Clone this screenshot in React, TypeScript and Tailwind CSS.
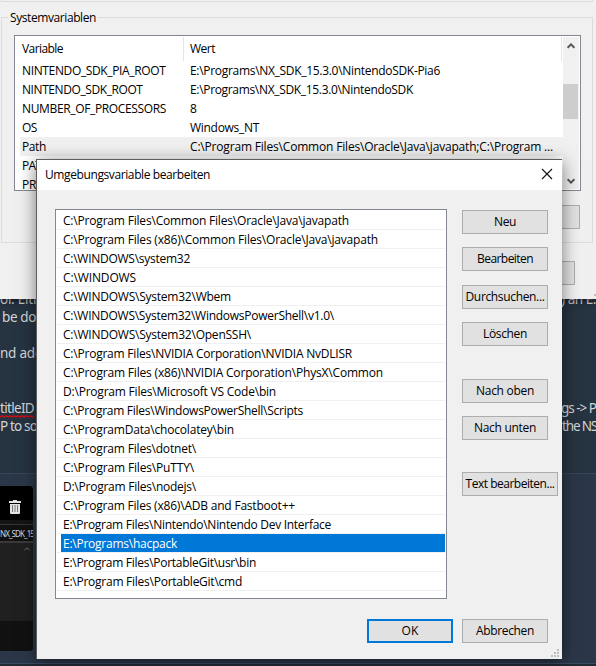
import { useLayoutEffect, useRef, useState } from "react";

// Text run whose tracking is adjusted so that it spans `w` pixels.
function Fit({ t, w }: { t: string; w: number }) {
  const ref = useRef<HTMLSpanElement>(null);
  const [ls, setLs] = useState(0);
  useLayoutEffect(() => {
    if (ref.current) {
      const natural = ref.current.getBoundingClientRect().width - ls * t.length;
      setLs((w - natural) / t.length);
    }
  }, [t, w]);
  return (
    <span ref={ref} className="inline-block whitespace-pre" style={{ letterSpacing: ls }}>
      {t}
    </span>
  );
}

type Row = [string, number, string, number];
const variables: Row[] = [
  ["NINTENDO_SDK_PIA_ROOT", 143.5, "E:\\Programs\\NX_SDK_15.3.0\\NintendoSDK-Pia6", 250],
  ["NINTENDO_SDK_ROOT", 120.5, "E:\\Programs\\NX_SDK_15.3.0\\NintendoSDK", 223],
  ["NUMBER_OF_PROCESSORS", 144, "8", 6.5],
  ["OS", 15, "Windows_NT", 69],
  ["Path", 24, "C:\\Program Files\\Common Files\\Oracle\\Java\\javapath;C:\\Program ...", 363],
  ["PAT", 19, "", 0],
  ["PR", 14, "", 0],
];

const paths: [string, number][] = [
  ["C:\\Program Files\\Common Files\\Oracle\\Java\\javapath", 286],
  ["C:\\Program Files (x86)\\Common Files\\Oracle\\Java\\javapath", 315],
  ["C:\\WINDOWS\\system32", 127],
  ["C:\\WINDOWS", 73],
  ["C:\\WINDOWS\\System32\\Wbem", 168],
  ["C:\\WINDOWS\\System32\\WindowsPowerShell\\v1.0\\", 271],
  ["C:\\WINDOWS\\System32\\OpenSSH\\", 188],
  ["C:\\Program Files\\NVIDIA Corporation\\NVIDIA NvDLISR", 289],
  ["C:\\Program Files (x86)\\NVIDIA Corporation\\PhysX\\Common", 320],
  ["D:\\Program Files\\Microsoft VS Code\\bin", 213],
  ["C:\\Program Files\\WindowsPowerShell\\Scripts", 240],
  ["C:\\ProgramData\\chocolatey\\bin", 171],
  ["C:\\Program Files\\dotnet\\", 133],
  ["C:\\Program Files\\PuTTY\\", 131],
  ["D:\\Program Files\\nodejs\\", 133],
  ["C:\\Program Files (x86)\\ADB and Fastboot++", 232],
  ["E:\\Program Files\\Nintendo\\Nintendo Dev Interface", 268],
  ["E:\\Programs\\hacpack", 114],
  ["E:\\Program Files\\PortableGit\\usr\\bin", 193],
  ["E:\\Program Files\\PortableGit\\cmd", 179],
];

function Button({ t, w, className = "", primary = false }: { t: string; w: number; className?: string; primary?: boolean }) {
  return (
    <button
      className={`flex h-6 shrink-0 items-center justify-center bg-[#e1e1e1] ${
        primary ? "border-2 border-[#0078d7]" : "border border-[#adadad]"
      } ${className || "w-[86px]"}`}
    >
      <Fit t={t} w={w} />
    </button>
  );
}

function Chevron({ down = false }: { down?: boolean }) {
  return (
    <svg viewBox="0 0 8 6" className={`h-1.5 w-2 ${down ? "rotate-180" : ""}`}>
      <path d="M0.6 4.8 4 1.4 7.4 4.8" fill="none" stroke="#555" strokeWidth="2" />
    </svg>
  );
}

function ForumPage() {
  return (
    <div className="flex h-[666px] flex-col bg-[#263340] font-['Noto_Sans','Open_Sans',sans-serif] text-[13.5px] text-[#d2d5d8]">
      <div className="h-[473px] pt-[290px] leading-[18px]">
        <div className="flex h-[18px] justify-between">
          <Fit t="or. Eith" w={41} />
          <div className="w-[35px]"><Fit t=") an E:" w={35} /></div>
        </div>
        <div className="h-[18px] pl-0.5"><Fit t="be do" w={34} /></div>
        <div className="mt-[18px] h-[18px]"><Fit t="nd add" w={43} /></div>
        <div className="mt-[37px] flex h-[18px] justify-between">
          <div className="h-[18px]">
            <Fit t="titleID" w={34} />
            <svg viewBox="0 0 34 3" className="-mt-0.5 block h-[3px] w-[34px]">
              <path d="M0 2 2 .8 4 2 6 .8 8 2 10 .8 12 2 14 .8 16 2 18 .8 20 2 22 .8 24 2 26 .8 28 2 30 .8 32 2 34 .8" fill="none" stroke="#e00b12" strokeWidth="1.2" />
            </svg>
          </div>
          <div className="w-[35px]"><Fit t="gs -> P" w={35} /></div>
        </div>
        <div className="flex h-[18px] justify-between">
          <Fit t="P to so" w={37} />
          <div className="w-[34px]"><Fit t="the NS" w={35} /></div>
        </div>
      </div>
      <div className="h-[190px] border-t border-[#34445a] bg-[#2b3748] pt-3">
        <div className="flex h-[165px] w-[33px] flex-col overflow-hidden rounded-r bg-[#202020]">
          <div className="flex h-[34px] shrink-0 items-center bg-black pt-2 pl-[9px]">
            <svg viewBox="0 0 12 14" className="h-[14px] w-3">
              <path d="M0 1h4V0h4v1h4v2H0zM1 4h10v9a1 1 0 0 1-1 1H2a1 1 0 0 1-1-1z" fill="#e4e4e4" />
              <path d="M3.5 5v7M6 5v7M8.5 5v7" stroke="#777" strokeWidth="1" />
            </svg>
          </div>
          <div className="h-[5px] shrink-0 border-b border-[#343434] bg-[#141414]" />
          <div className="h-[18px] shrink-0 border-b-2 border-[#3a3a3a] bg-[#111] text-[8px] leading-[17px]">
            <Fit t="NX_SDK_15" w={34} />
          </div>
          <div className="flex h-[78px] shrink-0 justify-end pt-1 pr-[3px]">
            <svg viewBox="0 0 6 4" className="h-1 w-1.5"><path d="M.5 3 3 .8 5.5 3" fill="none" stroke="#777" /></svg>
          </div>
          <div className="flex-1 bg-[#111]" />
        </div>
      </div>
      <div className="flex-1 border-t border-[#3a4c63] bg-[#202b38]" />
    </div>
  );
}

function SystemWindow() {
  return (
    <div className="absolute inset-x-0 top-0 flex h-[299px] flex-col bg-[#f0f0f0] shadow-[0_2px_6px_rgba(0,0,0,0.5)]">
      <div className="mr-[3px] ml-px h-0.5 border-r border-b border-l border-[#dcdcdc]" />
      <fieldset className="relative mt-[15px] mr-[3px] ml-px h-[226px] shrink-0 border border-[#dcdcdc] pt-[17px] pl-3">
        <div className="absolute top-[-8px] left-[6px] bg-[#f0f0f0] px-0.5 leading-4"><Fit t="Systemvariablen" w={86} /></div>
        <div className="flex h-[156px] w-[567px] overflow-hidden border border-[#828790] bg-white p-px">
          <div className="flex w-[547px] shrink-0 flex-col">
            <div className="flex h-6 shrink-0 items-center">
              <div className="flex h-6 w-[168px] items-center border-r border-[#e5e5e5] pl-1.5"><Fit t="Variable" w={41} /></div>
              <div className="flex h-6 w-[378px] items-center border-r border-[#e5e5e5] pl-1.5"><Fit t="Wert" w={25} /></div>
            </div>
            {variables.map(([n, w, v, vw]) => (
              <div key={n} className={`ml-1 flex h-[19px] shrink-0 items-center pt-px pl-0.5 ${n === "Path" ? "bg-[#f0f0f0]" : ""}`}>
                <div className="w-[168px]"><Fit t={n} w={w} /></div>
                {v && <Fit t={v} w={vw} />}
              </div>
            ))}
          </div>
          <div className="flex w-4 flex-col items-center bg-[#f0f0f0] pt-[6px]">
            <Chevron />
            <div className="mt-[35px] h-[35px] w-[15px] self-start bg-[#cdcdcd]" />
            <div className="mt-[59px]"><Chevron down /></div>
          </div>
        </div>
        <div className="mt-[14px] ml-[480px] h-6 w-[86px] border border-[#adadad] bg-[#e1e1e1]" />
      </fieldset>
      <div className="mt-[18px] ml-[489px] h-6 w-[86px] shrink-0 border border-[#adadad] bg-[#e1e1e1]" />
      <div className="mt-[9px] ml-[594px] h-0.5 w-0.5 bg-[#bfbfbf]" />
    </div>
  );
}

function EditDialog() {
  return (
    <div className="absolute top-[159px] left-9 flex h-[500px] w-[526px] flex-col border-t border-l border-[#5e5e5e] bg-[#f0f0f0] shadow-[0_3px_16px_rgba(0,0,0,0.5)]">
      <div className="flex h-[30px] shrink-0 items-center justify-between bg-white pr-[9px] pl-2">
        <Fit t="Umgebungsvariable bearbeiten" w={165} />
        <svg viewBox="0 0 12 12" className="-mt-0.5 h-3 w-3">
          <path d="M1 1 11 11M11 1 1 11" stroke="#111" strokeWidth="1.1" />
        </svg>
      </div>
      <div className="flex pt-[19px] pl-[18px]">
        <div className="h-[390px] w-[392px] shrink-0 border border-[#828790] bg-white p-px">
          {paths.map(([p, w]) => (
            <div key={p} className="flex h-[19px] border-b border-[#f0f0f0]">
              <div className={`ml-1 flex h-[18px] w-96 items-center pl-0.5 pt-0.5 ${p.endsWith("hacpack") ? "bg-[#0078d7] text-white" : ""}`}>
                <Fit t={p} w={w} />
              </div>
            </div>
          ))}
        </div>
        <div className="flex flex-col pt-px pl-[15px]">
          <Button t="Neu" w={22} />
          <Button t="Bearbeiten" w={56} className="mt-[13px] w-[86px]" />
          <Button t="Durchsuchen..." w={79} className="mt-[14px] w-[86px]" />
          <Button t="Löschen" w={44} className="mt-[13px] w-[86px]" />
          <Button t="Nach oben" w={58} className="mt-[33px] w-[86px]" />
          <Button t="Nach unten" w={62} className="mt-[13px] w-[86px]" />
          <Button t="Text bearbeiten..." w={89} className="mt-8 w-24" />
        </div>
      </div>
      <div className="mt-5 flex gap-[9px] pl-[330px]">
        <Button t="OK" w={17} primary />
        <Button t="Abbrechen" w={58} />
      </div>
      <svg viewBox="0 0 8 8" className="mt-1.5 mr-[3px] h-2 w-2 self-end" shapeRendering="crispEdges">
        <path d="M6 0h2v2H6zM3 3h2v2H3zM6 3h2v2H6zM0 6h2v2H0zM3 6h2v2H3zM6 6h2v2H6z" fill="#bfbfbf" />
      </svg>
    </div>
  );
}

export default function App() {
  return (
    <div className="relative h-[666px] w-[596px] overflow-hidden font-['Open_Sans','Noto_Sans',sans-serif] text-[12px] leading-4 text-black">
      <ForumPage />
      <SystemWindow />
      <EditDialog />
    </div>
  );
}
